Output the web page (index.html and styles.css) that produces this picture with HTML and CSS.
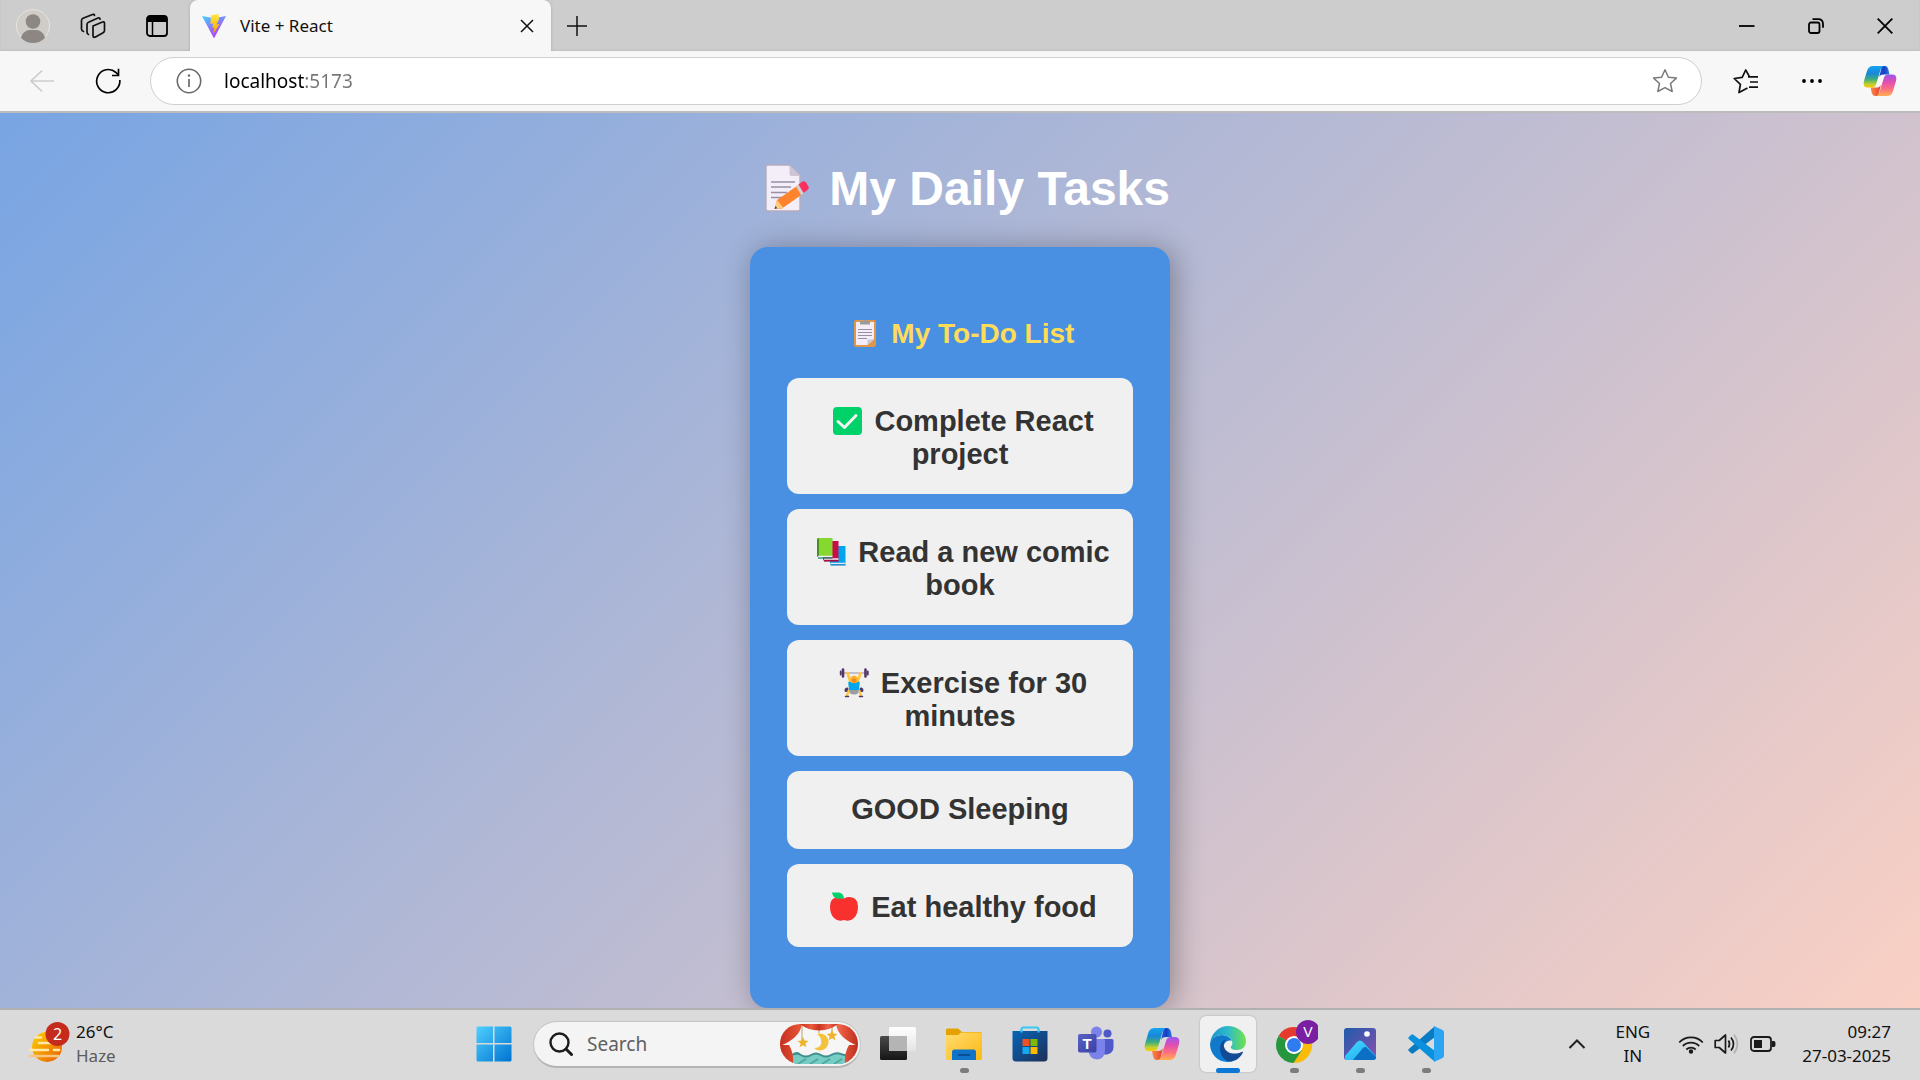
FILE: index.html
```
<!DOCTYPE html>
<html lang="en">
<head>
<meta charset="utf-8">
<title>Vite + React</title>
<link rel="stylesheet" href="styles.css">
</head>
<body>
<svg class="defs" width="0" height="0" aria-hidden="true">
  <defs>
    <linearGradient id="cp-a" x1="0" y1="0" x2="0" y2="1"><stop offset="0" stop-color="#12a5f0"/><stop offset=".35" stop-color="#1a86d8"/><stop offset=".62" stop-color="#3fae7c"/><stop offset=".85" stop-color="#c4d02c"/><stop offset="1" stop-color="#ffc800"/></linearGradient>
    <linearGradient id="cp-b" x1="0" y1="1" x2="0" y2="0"><stop offset="0" stop-color="#ffb04f"/><stop offset=".35" stop-color="#fb6c85"/><stop offset=".65" stop-color="#e04fb0"/><stop offset="1" stop-color="#9a55f0"/></linearGradient>
    <linearGradient id="cp-c"><stop offset="0" stop-color="#1a58d8"/><stop offset=".5" stop-color="#173fc4"/><stop offset="1" stop-color="#2b82e0"/></linearGradient>
    <linearGradient id="cp-d"><stop offset="0" stop-color="#ff8a4c"/><stop offset="1" stop-color="#e0402f"/></linearGradient>
    <symbol id="copilot" viewBox="0 0 36 34">
      <path fill="url(#cp-c)" d="M20 1h3c2 0 3 1 4 4l1 5h-6c-3 0-4 1-5 3z"/>
      <path fill="url(#cp-d)" d="M16 33h-3c-2 0-3-1-4-4l-1-5h6c3 0 4-1 5-3z"/>
      <path fill="url(#cp-a)" d="M11 1h12c-3 0-4 3-5 6l-4 13c-1 3-2 4-5 4H5c-4 0-5-3-4-7L4 7c1-4 3-6 7-6z"/>
      <path fill="url(#cp-b)" d="M25 33H13c3 0 4-3 5-6l4-13c1-3 2-4 5-4h4c4 0 5 3 4 7l-3 10c-1 4-3 6-7 6z"/>
    </symbol>
    <linearGradient id="vt-a" x1="0" y1="0" x2=".6" y2="1"><stop offset="0" stop-color="#41d1ff"/><stop offset="1" stop-color="#bd34fe"/></linearGradient>
    <linearGradient id="vt-b" x1="0" y1="0" x2="0" y2="1"><stop offset="0" stop-color="#ffea3a"/><stop offset="1" stop-color="#ff9f00"/></linearGradient>
    <linearGradient id="win" x1="0" y1="0" x2="1" y2="1"><stop offset="0" stop-color="#4fd0ff"/><stop offset="1" stop-color="#0072d0"/></linearGradient>
    <linearGradient id="sun" x1="0" y1="0" x2="1" y2="1"><stop offset="0" stop-color="#ffd400"/><stop offset="1" stop-color="#e85a00"/></linearGradient>
    <linearGradient id="curt"><stop offset="0" stop-color="#c4301d"/><stop offset=".3" stop-color="#ee5a3c"/><stop offset=".5" stop-color="#c93420"/><stop offset=".75" stop-color="#f0644a"/><stop offset="1" stop-color="#bf2d1c"/></linearGradient>
    <linearGradient id="tv-a" x1="0" y1="0" x2="0" y2="1"><stop offset="0" stop-color="#4a4a4a"/><stop offset="1" stop-color="#151515"/></linearGradient>
    <linearGradient id="tv-b" x1="0" y1="0" x2="0" y2="1"><stop offset="0" stop-color="#fff"/><stop offset="1" stop-color="#e4e4e4"/></linearGradient>
    <linearGradient id="fold" x1="0" y1="0" x2="1" y2="1"><stop offset="0" stop-color="#ffdc70"/><stop offset="1" stop-color="#fcb812"/></linearGradient>
    <linearGradient id="store" x1="0" y1="0" x2="1" y2="1"><stop offset="0" stop-color="#0565b8"/><stop offset="1" stop-color="#1f2f58"/></linearGradient>
    <linearGradient id="teams" x1="0" y1="0" x2="1" y2="1"><stop offset="0" stop-color="#5a62c4"/><stop offset="1" stop-color="#3a41a4"/></linearGradient>
    <linearGradient id="ed-a"><stop offset="0" stop-color="#1b92cf"/><stop offset=".5" stop-color="#2fbbc9"/><stop offset="1" stop-color="#6fe34a"/></linearGradient>
    <linearGradient id="ed-b" x1="0" y1="0" x2="1" y2="1"><stop offset="0" stop-color="#1474c0"/><stop offset="1" stop-color="#0a84e0"/></linearGradient>
    <linearGradient id="ph" x1="0" y1="0" x2="1" y2="1"><stop offset="0" stop-color="#1f5cab"/><stop offset="1" stop-color="#8a4fae"/></linearGradient>
    <linearGradient id="ph-b" x1="0" y1="0" x2="1" y2="1"><stop offset="0" stop-color="#48dcff"/><stop offset="1" stop-color="#18a4ee"/></linearGradient>
  </defs>
</svg>

<header class="browser">
  <div class="tab-strip">
    <button class="strip-btn" aria-label="Profile">
      <svg width="34" height="34" viewBox="0 0 34 34"><circle cx="17" cy="17" r="16.500" fill="#d0cdc8" stroke="#e6e4e0"/><circle cx="17" cy="12.500" r="7.300" fill="#8c8783"/><path d="M5 29c1-5 5-8 9-8h6c4 0 8 3 9 8-3 3-7 5-12 5s-9-2-12-5z" fill="#8c8783"/></svg>
    </button>
    <button class="strip-btn" aria-label="Workspaces">
      <svg width="26" height="26" viewBox="0 0 26 26" fill="none" stroke="#111" stroke-width="1.700" stroke-linejoin="round" stroke-linecap="round"><path d="M13 13l9.500-4q2-.7 2 1.300v7.200q0 1.500-1.400 2.200l-7.600 4.200Q13 25 13 23z"/><path d="M8.500 21.500Q7 21 7 19v-7.500q0-1.700 1.500-2.300L18 5q2-.6 2 1.200"/><path d="M3.500 18.500Q1.500 18 1.500 16V7.500q0-1.600 1.500-2.200L12.500 1.500q1.800-.6 2 .8"/></svg>
    </button>
    <button class="strip-btn strip-btn-last" aria-label="Tab actions">
      <svg width="22" height="22" viewBox="0 0 22 22"><rect x="1" y="1" width="20" height="20" rx="3" fill="none" stroke="#000" stroke-width="1.800"/><path d="M1 7V4q0-3 3-3h14q3 0 3 3v3z"/><path d="M6.500 7v14" stroke="#000" stroke-width="1.500"/></svg>
    </button>
    <div class="tab">
      <svg width="26" height="26" viewBox="0 0 26 26"><path fill="url(#vt-a)" d="M1 3l12 2.200L25 3 13.500 24.500q-.5 1-1 0z"/><path fill="url(#vt-b)" d="M17.500 1L10 2.200 9.500 11l2.600-.4-.8 4.400 2-.4-1 6.400 6.200-10-3.200.6 2.700-5.200z"/></svg>
      <span class="tab-title">Vite + React</span>
      <button class="tab-close" aria-label="Close tab"><svg width="14" height="14" viewBox="0 0 14 14"><path d="M1 1l12 12M13 1L1 13" stroke="#111" stroke-width="1.500"/></svg></button>
    </div>
    <button class="new-tab" aria-label="New tab"><svg width="22" height="22" viewBox="0 0 22 22"><path d="M11 1v20M1 11h20" stroke="#111" stroke-width="1.500"/></svg></button>
    <div class="window-controls">
      <button aria-label="Minimize"><svg width="16" height="16" viewBox="0 0 16 16"><path d="M0 8h15.500" stroke="#000" stroke-width="1.800"/></svg></button>
      <button aria-label="Restore"><svg width="16" height="16" viewBox="0 0 16 16" fill="none" stroke="#000" stroke-width="1.800"><rect x="1" y="4.500" width="10.500" height="10.500" rx="2"/><path d="M4.500 1.200H10q5 0 5 5v3.500"/></svg></button>
      <button aria-label="Close"><svg width="16" height="16" viewBox="0 0 16 16"><path d="M.7.7l14.600 14.600M15.300.7L.7 15.300" stroke="#000" stroke-width="1.800"/></svg></button>
    </div>
  </div>
  <div class="toolbar">
    <button class="tool-btn" aria-label="Back"><svg width="24" height="22" viewBox="0 0 24 22" fill="none" stroke="#cdcdcd" stroke-width="1.600"><path d="M24 11H1M12 .7L1 11l11 10.300"/></svg></button>
    <button class="tool-btn" aria-label="Reload"><svg width="26" height="26" viewBox="0 0 26 26" fill="none" stroke="#000" stroke-width="1.700"><path d="M24.800 12A11.600 11.600 0 1 1 21 4.500l2.500 2.500M23.500.8V7.500H17"/></svg></button>
    <div class="address">
      <svg width="26" height="26" viewBox="0 0 26 26"><circle cx="13" cy="13" r="11.700" fill="none" stroke="#6a6a6a" stroke-width="1.600"/><path d="M13 11v8" stroke="#6a6a6a" stroke-width="1.700"/><circle cx="13" cy="7.500" r="1.200" fill="#6a6a6a"/></svg>
      <input class="url" type="text" value="localhost:5173" aria-label="Address" spellcheck="false">
      <button class="bare" aria-label="Add to favorites"><svg width="26" height="26" viewBox="0 0 26 26"><path d="M13 1.800l3.400 7.400 8 .9-5.900 5.400 1.700 8L13 19.600 5.800 23.500l1.700-8-5.900-5.400 8-.9z" fill="none" stroke="#7a7a7a" stroke-width="1.500" stroke-linejoin="round"/></svg></button>
    </div>
    <button class="tool-btn-end" aria-label="Favorites"><svg width="26" height="26" viewBox="0 0 26 26" fill="none" stroke="#111" stroke-width="1.700" stroke-linejoin="round"><path d="M14.500 20L6 24.500l1.400-8.200L1.200 10.500l8-1.200L12.700 2l3.500 6.200M15 8.800h10M17 14h8M16 19.200h9"/></svg></button>
    <button class="tool-btn-end tool-btn-menu" aria-label="Menu"><svg width="22" height="6" viewBox="0 0 22 6"><circle cx="3" cy="3" r="1.900"/><circle cx="11" cy="3" r="1.900"/><circle cx="19" cy="3" r="1.900"/></svg></button>
    <button class="tool-btn-end" aria-label="Copilot"><svg width="34" height="32"><use href="#copilot"/></svg></button>
  </div>
</header>

<main class="page">
  <h1 class="title"><svg class="title-emoji" viewBox="2 0 66 52" role="img" aria-label="Memo">
    <path d="M20 2h21l11 10v34q0 2-2 2H20q-2 0-2-2V4q0-2 2-2z" fill="#f3eef8" stroke="#b4acbc" stroke-width="1.400"/><path d="M41.500 2v9q0 2 2 2h9z" fill="#cdc4d6"/>
    <path d="M23 19h24M23 24h20M23 29.500h16M23 34.500h11" stroke="#9b8fa6" stroke-width="1.600"/>
    <path d="M26.500 46l2.500-9 22-15.500 5 8.500-22 15.500z" fill="#ff822d"/><path d="M26.500 46l2.500-9 6.500 8z" fill="#ffce7c"/><path d="M26.500 46l1-3 1.800 2.200z" fill="#433b6b"/><path d="M48 23.500l3-2 5.500 8.500-3.500 2z" fill="#d3d3d3"/><path d="M50.500 21.500l4-3q2-1 3.500 1l2.500 4q1 2-1 3.500l-4 3z" fill="#f92f60"/>
  </svg> My Daily Tasks</h1>
  <section class="card">
    <h2 class="list-title"><svg class="list-emoji" viewBox="0 0 38 32" role="img" aria-label="Clipboard">
      <rect x="8" y="3" width="22" height="27" rx="2" fill="#e19747"/><path d="M10 5h18v17l-7 6H10z" fill="#f3eef8"/><path d="M21.500 28.500v-6H28z" fill="#cdc4d6"/><path d="M14 7.500V4h3.500q1.500-3 3 0H24v3.500z" fill="#9b9b9b"/><path d="M12 12.500h14M12 15.500h14M12 18.500h14M12 21.500h9" stroke="#998ea4"/>
    </svg> My To-Do List</h2>
    <ul class="tasks">
      <li class="task"><svg class="emoji" viewBox="0 0 40 36" role="img" aria-label="Done"><rect x="7" y="7" width="29" height="28" rx="4" fill="#00d26a"/><path d="M12 21.500l6.500 6L30 15.500" fill="none" stroke="#f4f4f4" stroke-width="3" stroke-linecap="round" stroke-linejoin="round"/></svg> Complete React project</li>
      <li class="task"><svg class="emoji" viewBox="0 0 40 36" role="img" aria-label="Books">
        <path d="M20 15h15.500v19H22q-2 0-2-2z" fill="#00a6ed"/><path d="M20.500 32.500h15" stroke="#e8e4ee" stroke-width="1.500"/><path d="M20.500 34h15" stroke="#0074ba"/>
        <path d="M13 10h15.500v20H15q-2 0-2-2z" fill="#ca0b4a"/><path d="M14 28h14.500" stroke="#f3eef8" stroke-width="1.500"/><path d="M14 30h14.500" stroke="#990838" stroke-width="1.200"/>
        <path d="M7 9q0-2 2-2h13.500v18H9q-2 2-2 0z" fill="#86d72f"/><path d="M7 9q0-2 2-2v18q-2 0-2 1.500z" fill="#44911b"/><path d="M8 25.500h14.500" stroke="#f3eef8" stroke-width="1.500"/><path d="M8 27h14.500" stroke="#008463" stroke-width="1.200"/>
      </svg> Read a new comic book</li>
      <li class="task"><svg class="emoji" viewBox="0 0 40 36" role="img" aria-label="Weight lifter">
        <path d="M7 11h28" stroke="#998ea4"/><path d="M10 7.500v7M32.500 7.500v7" stroke="#533566" stroke-width="2.600" stroke-linecap="round"/><path d="M7.700 9.500v3M34.800 9.500v3" stroke="#533566" stroke-width="1.800" stroke-linecap="round"/>
        <path d="M14.500 11l3 9M27.500 11l-3 9" stroke="#ffc83d" stroke-width="2.600" stroke-linecap="round"/>
        <path d="M16 19.500l5 1.500 5-1.500q1 0 .7 2.500l-1.200 8h-9l-1.200-8q-.3-2.500.7-2.500z" fill="#00a6ed"/><circle cx="21" cy="17.500" r="3.800" fill="#ffb02e"/><circle cx="21" cy="18.500" r="2.300" fill="#f08c1c"/>
        <path d="M16.500 28h9v3q-4.500 3-9 0z" fill="#9b9ba8"/><path d="M15.500 28l-1.500 6M26.500 28l1.500 6" stroke="#ffc83d" stroke-width="2.400"/><path d="M14 27q-1.200.5-1 1.500M28 27q1.200.5 1 1.500" stroke="#533566" stroke-width="3" stroke-linecap="round" fill="none"/><path d="M12.500 34.500h3M26.500 34.500h3" stroke="#533566" stroke-width="1.500" stroke-linecap="round"/>
      </svg> Exercise for 30 minutes</li>
      <li class="task">GOOD Sleeping</li>
      <li class="task"><svg class="emoji" viewBox="0 0 40 36" role="img" aria-label="Red apple"><path d="M21 12.500q4-2.500 9-.8 5 1.800 5 9T31 32q-4 4-10 2-6 2-10-2-4-4-4-11.300t5-9q5-1.700 9 .8z" fill="#f8312f"/><path d="M9 6.500h7q5 1 5 6.500-3.500-.6-6.500-.3Q10 12 9 6.500z" fill="#00d26a"/></svg> Eat healthy food</li>
    </ul>
  </section>
</main>

<footer class="taskbar">
  <a class="weather" href="#weather">
    <svg width="44" height="44" viewBox="0 0 44 44"><circle cx="20" cy="25" r="15" fill="url(#sun)"/><g stroke="#ffe8a8" stroke-width="2.600" stroke-linecap="round"><path d="M9 15.500h5M12 21h14M3 28h18M27 28h5"/><path d="M3 34h28" stroke="#f6c684"/></g><circle cx="30.500" cy="12" r="12" fill="#c42b1c"/><text x="30.500" y="17.500" class="badge-text">2</text></svg>
    <span class="two-line"><span>26°C</span><span class="muted">Haze</span></span>
  </a>
  <nav class="apps" aria-label="Apps">
    <button class="app" aria-label="Start"><svg width="36" height="36" viewBox="0 0 36 36"><path d="M2 .5h15V17H.500V2q0-1.500 1.500-1.500zM18.500.5H34q1.500 0 1.500 1.500v15h-17zM.5 18.500H17v17H2q-1.500 0-1.500-1.500zM18.500 18.500h17V34q0 1.500-1.500 1.500H18.500z" fill="url(#win)"/></svg></button>
    <label class="search">
      <svg width="24" height="24" viewBox="0 0 24 24" fill="none" stroke="#1c1c1c" stroke-width="2.400" stroke-linecap="round"><circle cx="10.500" cy="10.500" r="9"/><path d="M17 17l5.500 5.500" stroke-width="3"/></svg>
      <input type="search" placeholder="Search" aria-label="Search">
      <svg class="search-art" viewBox="0 0 78 40"><rect width="78" height="40" fill="#f6f6f6"/>
        <path d="M22 0v18M39 0v9M52 0v12" stroke="#b08a3c" stroke-width=".8"/><path d="M12 30q5-4 9 0 5 3 10 0t10 0 10 0 10-1 8 1v10H12z" fill="#3f8f90"/><path d="M10 33q6-4 11-1t10 0 10 0 10 0 10-1 8 1v9H10z" fill="#76cdc4"/><path d="M18 40l8-5M30 40l8-5M42 40l8-5M54 40l8-5" stroke="#4fa39c" stroke-width="1.500"/>
        <path d="M37 10a8.500 8.500 0 1 1-3 14q9 0 7-9-1-3-4-5z" fill="#f3c23c"/><path d="M23 13l1.600 3.600 3.800.3-3 2.500 1 3.800-3.400-2-3.400 2 1-3.800-3-2.500 3.800-.3zM52 6l1.600 3.600 3.800.3-3 2.500 1 3.800-3.400-2-3.400 2 1-3.800-3-2.500 3.800-.3z" fill="#f0b42c"/>
        <path d="M0 0h22q-2 14-22 22zM78 0H56q2 14 22 22z" fill="url(#curt)"/><path d="M20 0h38q-8 6.500-19 6.500T20 0z" fill="url(#curt)"/><path d="M0 21h9q5 8 4 19H0zM78 21h-9q-5 8-4 19h13z" fill="url(#curt)"/></svg>
    </label>
    <button class="app app-first" aria-label="Task view"><svg width="36" height="36" viewBox="0 0 36 36"><rect x="0" y="10" width="27" height="24" rx="1.500" fill="url(#tv-a)"/><rect x="9" y="1" width="27" height="24" rx="1.500" fill="url(#tv-b)"/><path d="M9 10h18v15H9z" fill="#b4b4b4"/></svg></button>
    <button class="app running" aria-label="File Explorer"><svg width="36" height="36" viewBox="0 0 36 36"><path d="M0 4q0-1.500 1.500-1.500H12l4 3.500h18.500q1.500 0 1.500 1.500V12H0z" fill="#e5a100"/><path d="M0 9h12l3-2.500h21V32q0 2-2 2H2q-2 0-2-2z" fill="url(#fold)"/><path d="M6 34v-8q0-2.500 2.500-2.500h19Q30 23.500 30 26v8z" fill="#0f73c8"/><path d="M12 29h12" stroke="#0a4f96" stroke-width="2"/></svg></button>
    <button class="app" aria-label="Microsoft Store"><svg width="36" height="36" viewBox="0 0 36 36"><path d="M9.500 7V3q0-1.500 1.500-1.500h14q1.500 0 1.500 1.500v4" fill="none" stroke="#3cc8f2" stroke-width="2"/><path d="M.5 5h35v27q0 3.500-3.500 3.500H4Q.5 35.500.5 32z" fill="url(#store)"/><path d="M9.500 6.500V3M26.500 6.500V3" stroke="#3cc8f2" stroke-width="2"/><path d="M10.500 13h7v7h-7z" fill="#f25022"/><path d="M18.500 13h7v7h-7z" fill="#7fba00"/><path d="M10.500 21h7v7h-7z" fill="#18a8f0"/><path d="M18.500 21h7v7h-7z" fill="#ffb900"/></svg></button>
    <button class="app" aria-label="Teams"><svg width="36" height="36" viewBox="0 0 36 36"><circle cx="29.500" cy="7.500" r="4" fill="#5059c9"/><path d="M24 13h10q1.500 0 1.500 1.500V21q0 6-6.500 7.500h-5z" fill="#5059c9"/><circle cx="18.500" cy="6" r="5.500" fill="#7b83eb"/><path d="M11 13h14.500q1.500 0 1.500 1.500V24q0 9-8 9.500-8-.5-8.500-9z" fill="#7b83eb"/><rect x="0" y="8" width="18.500" height="18.500" rx="1.800" fill="url(#teams)"/><text x="9" y="23" class="teams-text">T</text></svg></button>
    <button class="app" aria-label="Copilot"><svg width="36" height="34"><use href="#copilot"/></svg></button>
    <button class="app active" aria-label="Microsoft Edge"><svg width="36" height="36" viewBox="0 0 36 36"><path fill="url(#ed-b)" d="M0 18C1 12 7 9 12 9c5 0 9 3 10 6-5-2-9 3-9 8 0 7 5 11 10 12C10 39 0 29 0 18z"/><path fill="url(#ed-a)" d="M0 18C1 7 9 0 18 0c10 0 18 7 18 15 0 6-4 9-9 9-4 0-7-1.500-6-3.500 1-1 1.500-2 1.300-4C22 12 17 9 12 9 6 9 1 13 0 18z"/><path fill="#124a96" d="M10 22c0-4 2.500-8 6-8.500-5 5-1 13.500 7 14 3.500.2 6-.2 8.500-1.500 1.500-.5 1.700.2 1.200 1-4 7-9.700 9-14.200 8.500C13.500 34 10 28 10 22z"/></svg></button>
    <button class="app running" aria-label="Google Chrome"><svg width="48" height="48" viewBox="0 0 48 48"><path fill="#e33b2e" d="M24 25L8.400 16a18 18 0 0 1 31.200 0z"/><path fill="#26973f" d="M24 25l-1 18A18 18 0 0 1 8.400 16z"/><path fill="#fbbc09" d="M24 25l15.600-9A18 18 0 0 1 23 43l9-14z"/><path fill="#e33b2e" d="M15 14h25l-8 3H24z"/><path fill="#26973f" d="M8.400 16L16 29l8 5 8-4-8.500 13z"/><circle cx="24" cy="25" r="9" fill="#fff"/><circle cx="24" cy="25" r="7" fill="#2f7cf0"/><circle cx="38" cy="12" r="12" fill="#7b1fa2"/><text x="38" y="17" class="profile-text">V</text></svg></button>
    <button class="app running" aria-label="Photos"><svg width="32" height="32" viewBox="0 0 32 32"><rect width="32" height="32" rx="3" fill="url(#ph)"/><path d="M1 28l12-14q3-3 6 0l13 14-1 3q-1 1-2 1H3q-1 0-2-1.500z" fill="url(#ph-b)"/><path d="M9 32l10-12q2-2 4 0l9 9q0 3-3 3z" fill="#0b6fc4"/><circle cx="23" cy="6" r="2.800" fill="#fff"/></svg></button>
    <button class="app running" aria-label="Visual Studio Code"><svg width="36" height="36" viewBox="0 0 36 36"><path d="M27 0L.8 23q-1 1 0 2l2.500 2.300q1 .7 2 0L27 11z" fill="#0a7ac2"/><path d="M27 36L.8 13q-1-1 0-2l2.500-2.300q1-.7 2 0L27 25z" fill="#0a90dc"/><path d="M26 0l8.500 4q1.500.8 1.500 2v24q0 1.200-1.500 2L26 36z" fill="#2aa5f4"/></svg></button>
  </nav>
  <div class="tray">
    <button class="bare chevron" aria-label="Show hidden icons"><svg width="18" height="12" viewBox="0 0 18 12"><path d="M1.500 10L9 2.500l7.500 7.500" fill="none" stroke="#222" stroke-width="2"/></svg></button>
    <span class="two-line lang"><span>ENG</span><span>IN</span></span>
    <div class="status">
      <svg width="26" height="20" viewBox="0 0 26 20" fill="none" stroke="#1a1a1a" stroke-width="1.800"><path d="M1.200 8.500a16 16 0 0 1 23.600 0M4.800 12a11.500 11.500 0 0 1 16.400 0M8.300 15.500a7 7 0 0 1 9.400 0"/><circle cx="13" cy="17.500" r="1.300" fill="#1a1a1a"/></svg>
      <svg width="26" height="22" viewBox="0 0 26 22" fill="none" stroke="#1a1a1a" stroke-width="1.700" stroke-linejoin="round"><path d="M1.200 7.500h4L11.500 2v18L5.200 14.500h-4zM14.500 7.500q2 3.500 0 7M17 4.500q5 6.500 0 13"/><path d="M20 1.500q7 9.500 0 19" stroke="#b2b2b2"/></svg>
      <svg width="26" height="16" viewBox="0 0 26 16"><rect x="1" y="1" width="20" height="14" rx="3" fill="none" stroke="#1a1a1a" stroke-width="1.800"/><path d="M4 4h8v8H4zM22 5h2q1.500 0 1.500 3T24 11h-2z" fill="#1a1a1a"/></svg>
    </div>
    <span class="two-line clock"><span>09:27</span><span>27-03-2025</span></span>
  </div>
</footer>
</body>
</html>
```
FILE: styles.css
```
* { box-sizing: border-box; }

body {
  margin: 0;
  min-height: 100vh;
  display: flex;
  flex-direction: column;
  font-family: "Noto Sans", sans-serif;
  color: #111;
}

svg { display: block; flex: none; }
.defs { position: absolute; }

button {
  display: flex;
  align-items: center;
  justify-content: center;
  padding: 0;
  border: 0;
  background: none;
  flex: none;
}

/* Browser chrome */
.tab-strip {
  display: flex;
  height: 51px;
  padding: 0 1px 0 3px;
  background: #cdcdcd;
  box-shadow: inset 0 -1px 2px #bdbdbd;
}
.strip-btn { width: 60px; }
.strip-btn-last { width: 67px; }
.tab {
  display: flex;
  align-items: center;
  width: 361px;
  padding: 0 10px 0 11px;
  gap: 13px;
  background: #f7f7f7;
  border-radius: 8px 8px 0 0;
  box-shadow: 0 0 3px #a8a8a8;
  clip-path: inset(0 -4px 0 -4px);
}
.tab-title {
  flex: 1;
  font-size: 17px;
  line-height: 24px;
}
.tab-close { width: 28px; height: 28px; }
.new-tab { width: 52px; }
.window-controls { display: flex; margin-left: auto; }
.window-controls button { width: 69px; }

.toolbar {
  display: flex;
  align-items: center;
  height: 62px;
  padding: 0 6px 0 9px;
  background: #f7f7f7;
  border-bottom: 2px solid #bcbcbc;
}
.tool-btn { width: 66px; height: 48px; }
.tool-btn-end { width: 68px; height: 48px; }
.tool-btn-menu { width: 66px; padding-right: 2px; }
.address {
  display: flex;
  flex: 1;
  align-items: center;
  gap: 22px;
  height: 48px;
  margin: 0 10px 0 9px;
  padding: 0 23px 0 25px;
  border: 1px solid #cfcfcf;
  border-radius: 24px;
  background: #fff;
}
.url {
  flex: 1;
  min-width: 0;
  padding: 0;
  border: 0;
  outline: 0;
  font: 19px/28px "Noto Sans", sans-serif;
  color: transparent;
  background: linear-gradient(to right, #000 80px, #767676 80px);
  background-clip: text;
  -webkit-background-clip: text;
}

/* To-do page */
.page {
  flex: 1;
  display: flex;
  flex-direction: column;
  align-items: center;
  padding-top: 46px;
  overflow: hidden;
  background: linear-gradient(135deg, #78a5e3, #fad0c4);
  font-family: "Liberation Sans", Arial, sans-serif;
}
.title {
  margin: 0 0 28px;
  font-size: 48px;
  line-height: 60px;
  color: #fff;
}
.title svg, .list-title svg, .task svg { display: inline-block; }
.title .title-emoji { width: 66px; height: 52px; vertical-align: -10px; }
.card {
  width: 420px;
  padding: 69px 37px 61px;
  border-radius: 18px;
  background: #4990e2;
  box-shadow: 4px 2px 30px rgba(0, 0, 0, 0.32);
}
.list-title {
  margin: 0 0 26px;
  font-size: 28px;
  line-height: 36px;
  text-align: center;
  color: #ffdc57;
}
.list-title .list-emoji { width: 38px; height: 32px; vertical-align: -6px; }
.tasks {
  display: flex;
  flex-direction: column;
  gap: 15px;
  margin: 0;
  padding: 0;
  list-style: none;
}
.task {
  padding: 22px 22px 23px;
  border-radius: 12px;
  background: #f0f0f0;
  font-size: 29px;
  font-weight: bold;
  line-height: 33px;
  text-align: center;
  color: #333;
}
.task .emoji { width: 40px; height: 36px; vertical-align: -5px; }

/* Taskbar */
.taskbar {
  display: grid;
  grid-template-columns: 1fr auto 1fr;
  align-items: center;
  height: 72px;
  padding-bottom: 2px;
  border-top: 2px solid #b0b0b0;
  background: #dadada;
  font-size: 17px;
  line-height: 24px;
}
.weather {
  display: flex;
  align-items: center;
  gap: 5px;
  padding-left: 27px;
  color: inherit;
  text-decoration: none;
}
.two-line { display: flex; flex-direction: column; }
.muted { color: #5c5c5c; }
.badge-text { font-size: 16px; text-anchor: middle; fill: #fff; }
.teams-text { font-size: 15px; font-weight: bold; text-anchor: middle; fill: #fff; }
.profile-text { font-size: 14px; text-anchor: middle; fill: #fff; }

.apps { display: flex; align-items: center; }
.app {
  position: relative;
  width: 56px;
  height: 56px;
  margin: 0 5px;
  border-radius: 6px;
}
.active { background: #f0f0f0; box-shadow: 0 0 2px #a0a0a0; }
.running::after, .active::after {
  content: "";
  position: absolute;
  bottom: -1px;
  width: 9px;
  height: 5px;
  border-radius: 3px;
  background: #7c7c7c;
}
.active::after { width: 24px; background: #0a78d4; }
.search {
  display: flex;
  align-items: center;
  gap: 14px;
  width: 328px;
  height: 47px;
  margin: 0 4px 0 6px;
  padding: 0 2px 0 15px;
  border: 1px solid #c4c4c4;
  border-bottom: 2px solid #b4b4b4;
  border-radius: 24px;
  background: #f4f4f4;
}
.search input {
  flex: 1;
  min-width: 0;
  padding: 0;
  border: 0;
  outline: 0;
  background: none;
  font: 19px/28px "Noto Sans", sans-serif;
}
.search input::placeholder { color: #606060; opacity: 1; }
.search-art { width: 78px; height: 40px; border-radius: 20px; }

.tray {
  display: flex;
  align-items: center;
  justify-content: flex-end;
  padding-right: 29px;
}
.chevron { width: 30px; margin-right: 24px; }
.lang { align-items: center; margin-right: 28px; }
.status { display: flex; align-items: center; gap: 10px; margin-right: 26px; }
.clock { align-items: flex-end; }
```
